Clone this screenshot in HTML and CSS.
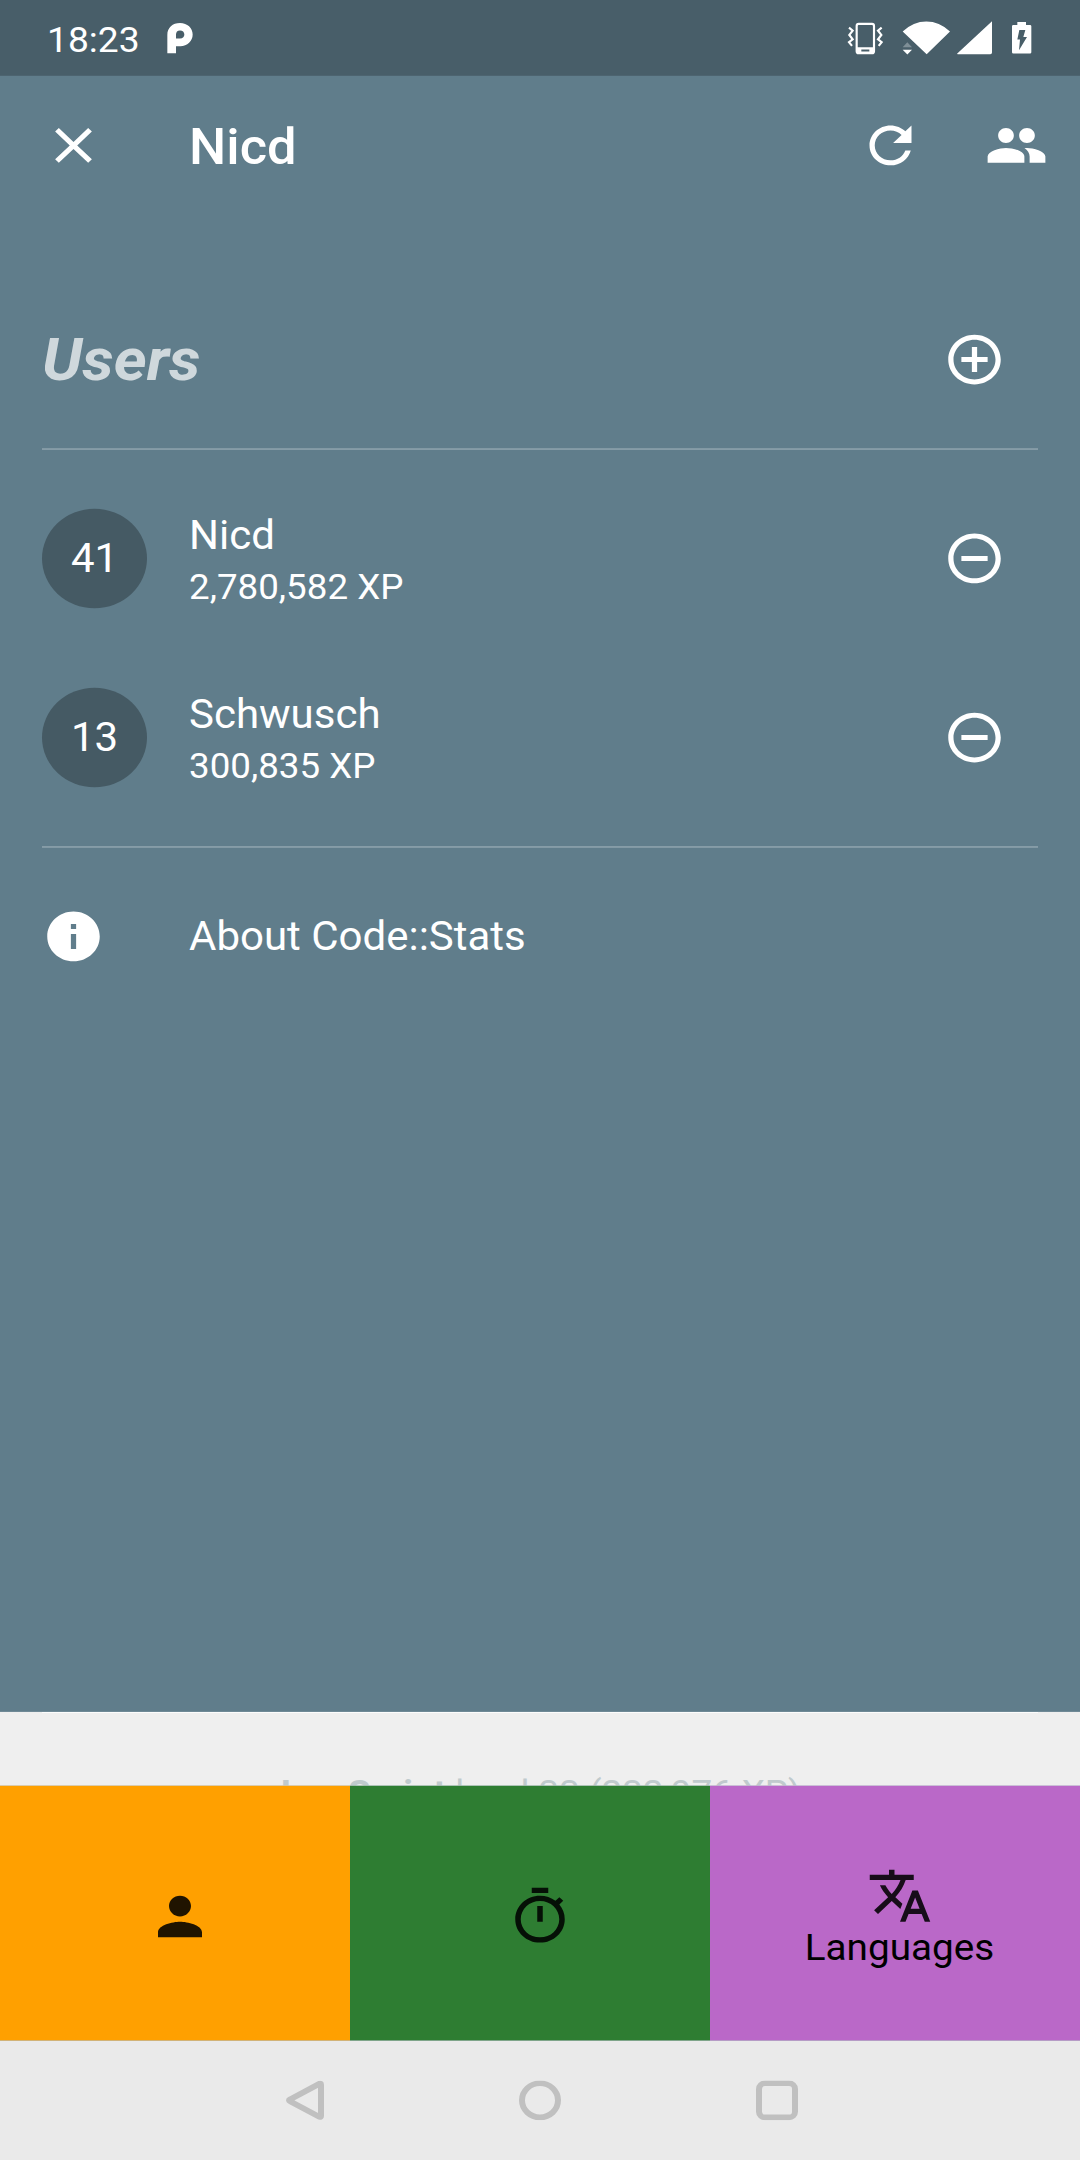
FILE: index.html
```html
<!DOCTYPE html>
<html lang="en">
<head>
<meta charset="utf-8">
<title>Code::Stats</title>
<link rel="stylesheet" href="styles.css">
</head>
<body>
<div class="screen">
  <header class="status-bar">
    <span class="clock">18:23</span>
    <svg class="app-mark" viewBox="495 0 90 228" preserveAspectRatio="none"><path fill="#fff" fill-rule="evenodd" d="M502 160V105C502 83 518 69 540 69s38 15 38 35-16 35-37 35H528v21zM528 116h12c9 0 13-5 13-12s-5-12-13-12-12 5-12 12z"/></svg>
    <span class="spacer"></span>
    <svg class="status-icons" viewBox="75 0 570 228" preserveAspectRatio="none">
      <g fill="none" stroke="#fff" stroke-width="6.5">
        <rect x="110" y="72" width="52" height="88" rx="6"/>
        <path d="M87 83l11 9-10 13 10 13-11 9 9 11M185 83l-11 9 10 13-10 13 11 9-9 11"/>
      </g>
      <path fill="#fff" fill-rule="evenodd" d="M110 142h52v18h-52zM124 149v6h24v-6z"/>
      <path fill="#fff" d="M248 95Q280 65 319 65T390 95L320 163zM248 150h28l-14 14zM411 162L516 64v94q0 5-5 5H413zM592 66h26v9h12q4 0 4 4v78q0 4-4 4h-50q-4 0-4-4V79q0-4 4-4h12z"/>
      <path fill="#7f8f97" d="M248 142h28l-14-15z"/>
      <path fill="#485e68" d="M598 90h18l-6 21h11l-24 40 3-32h-8z"/>
    </svg>
  </header>

  <nav class="app-bar">
    <svg class="icon" viewBox="0 0 24 24"><path d="M19 6.41L17.59 5 12 10.59 6.41 5 5 6.41 10.59 12 5 17.59 6.41 19 12 13.41 17.59 19 19 17.59 13.41 12z"/></svg>
    <h1 class="title">Nicd</h1>
    <span class="action"><svg class="icon" viewBox="0 0 24 24"><path d="M17.65 6.35C16.2 4.9 14.21 4 12 4c-4.42 0-7.99 3.58-7.99 8s3.57 8 7.99 8c3.73 0 6.84-2.55 7.73-6h-2.08c-.82 2.33-3.04 4-5.65 4-3.31 0-6-2.69-6-6s2.69-6 6-6c1.66 0 3.14.69 4.22 1.78L13 11h7V4l-2.35 2.35z"/></svg></span>
    <span class="action"><svg class="icon" viewBox="0 0 24 24"><path d="M16 11c1.66 0 2.99-1.34 2.99-3S17.66 5 16 5c-1.66 0-3 1.34-3 3s1.34 3 3 3zm-8 0c1.66 0 2.99-1.34 2.99-3S9.66 5 8 5C6.34 5 5 6.34 5 8s1.34 3 3 3zm0 2c-2.33 0-7 1.17-7 3.5V19h14v-2.5c0-2.33-4.67-3.5-7-3.5zm8 0c-.29 0-.62.02-.97.05 1.16.84 1.97 1.97 1.97 3.45V19h6v-2.5c0-2.33-4.67-3.5-7-3.5z"/></svg></span>
  </nav>

  <main class="panel">
    <div class="row row-short">
      <h2 class="heading">Users</h2>
      <span class="action"><svg class="icon" viewBox="0 0 24 24"><path d="M13 7h-2v4H7v2h4v4h2v-4h4v-2h-4V7zm-1-5C6.48 2 2 6.48 2 12s4.480 10 10 10 10-4.480 10-10S17.520 2 12 2zm0 18c-4.410 0-8-3.590-8-8s3.590-8 8-8 8 3.590 8 8-3.590 8-8 8z"/></svg></span>
    </div>
    <div class="divider"></div>
    <div class="row">
      <span class="level">41</span>
      <div class="user"><span class="name">Nicd</span><span class="xp">2,780,582 XP</span></div>
      <span class="action"><svg class="icon" viewBox="0 0 24 24"><path d="M7 11v2h10v-2H7zm5-9C6.480 2 2 6.480 2 12s4.480 10 10 10 10-4.480 10-10S17.520 2 12 2zm0 18c-4.410 0-8-3.590-8-8s3.590-8 8-8 8 3.590 8 8-3.590 8-8 8z"/></svg></span>
    </div>
    <div class="row">
      <span class="level">13</span>
      <div class="user"><span class="name">Schwusch</span><span class="xp">300,835 XP</span></div>
      <span class="action"><svg class="icon" viewBox="0 0 24 24"><path d="M7 11v2h10v-2H7zm5-9C6.480 2 2 6.480 2 12s4.480 10 10 10 10-4.480 10-10S17.520 2 12 2zm0 18c-4.410 0-8-3.590-8-8s3.590-8 8-8 8 3.590 8 8-3.590 8-8 8z"/></svg></span>
    </div>
    <div class="divider"></div>
    <div class="row row-short">
      <svg class="icon about-icon" viewBox="0 0 24 24"><path d="M12 2C6.480 2 2 6.480 2 12s4.480 10 10 10 10-4.480 10-10S17.520 2 12 2zm1 15h-2v-6h2v6zm0-8h-2V7h2v2z"/></svg>
      <span class="name">About Code::Stats</span>
    </div>
  </main>

  <section class="sheet">
    <div class="sheet-edge"></div>
    <p class="progress"><b>JavaScript</b> level 33 (232,976 XP)</p>
  </section>

  <div class="tabs">
    <div class="tab tab-profile"><svg class="tab-icon" viewBox="0 0 24 24"><path d="M12 12c2.210 0 4-1.790 4-4s-1.790-4-4-4-4 1.790-4 4 1.790 4 4 4zm0 2c-2.670 0-8 1.340-8 4v2h16v-2c0-2.660-5.330-4-8-4z"/></svg></div>
    <div class="tab tab-recent"><svg class="tab-icon" viewBox="0 0 24 24"><path d="M15 1H9v2h6V1zm-4 13h2V8h-2v6zm8.030-6.610l1.420-1.420c-.430-.510-.900-.990-1.410-1.410l-1.420 1.420C16.070 4.740 14.120 4 12 4c-4.970 0-9 4.030-9 9s4.020 9 9 9 9-4.030 9-9c0-2.120-.740-4.070-1.970-5.610zM12 20c-3.870 0-7-3.130-7-7s3.130-7 7-7 7 3.130 7 7-3.130 7-7 7z"/></svg></div>
    <div class="tab tab-languages"><svg class="tab-icon" viewBox="0 0 24 24"><path d="M12.870 15.070l-2.540-2.510.030-.030c1.740-1.940 2.980-4.170 3.710-6.530H17V4h-7V2H8v2H1v1.990h11.170C11.500 7.920 10.440 9.750 9 11.350 8.070 10.320 7.300 9.190 6.690 8h-2c.730 1.630 1.730 3.170 2.980 4.560l-5.090 5.020L4 19l5-5 3.110 3.110.760-2.040zM18.500 10h-2L12 22h2l1.120-3h4.750L21 22h2l-4.500-12zm-2.620 7l1.620-4.330L19.120 17h-3.240z"/></svg><span class="tab-label">Languages</span></div>
  </div>

  <footer class="nav-bar">
    <svg class="nav-icon nav-back" viewBox="0 0 42 42"><path d="M36 4.500V37.500Q36 39 34.500 38.500L5 22Q3 21 5 20L34.500 3.500Q36 3 36 4.500z"/></svg>
    <svg class="nav-icon" viewBox="0 0 42 42"><circle cx="21" cy="21" r="18"/></svg>
    <svg class="nav-icon" viewBox="0 0 42 42"><rect x="3" y="3" width="36" height="36" rx="6"/></svg>
  </footer>
</div>
</body>
</html>
```
FILE: styles.css
```css
* { box-sizing: border-box; margin: 0; padding: 0; }
html, body { width: 1080px; height: 2160px; overflow: hidden; }
body { font-family: Roboto, "Liberation Sans", sans-serif; color: #fff; background: #607d8b; }

/* The layout is 1080x2280 and is fitted to a 2160px tall window. */
.screen {
  width: 1080px;
  height: 2280px;
  margin-bottom: -120px;
  display: flex;
  flex-direction: column;
  background: #607d8b;
  transform: scaleY(0.947368);
  transform-origin: 0 0;
}

.status-bar { height: 80px; flex: none; display: flex; align-items: center; background: #485e69; padding: 0 45px 0 47px; }
.clock { font-size: 37.2px; line-height: 76px; padding-top: 4px; }
.app-mark { width: 30px; height: 80px; margin-left: 25px; }
.spacer { flex: 1; }
.status-icons { width: 190px; height: 80px; flex: none; }

.app-bar { height: 147px; flex: none; display: flex; align-items: center; padding-left: 42px; }
.icon { width: 63px; height: 63px; fill: #fff; display: block; flex: none; }
.title { flex: 1; margin-left: 84px; padding-top: 3px; font-size: 52.5px; font-weight: 500; line-height: 62px; }
.action { width: 126px; flex: none; display: flex; justify-content: center; padding-right: 1px; }

.panel { height: 1580px; flex: none; padding: 79px 42px 0; }
.row { height: 189px; display: flex; align-items: center; }
.row-short { height: 147px; }
.heading { flex: 1; font-size: 63px; font-weight: 700; font-style: italic; line-height: 74px; color: #cfd8dc; }
.divider { height: 42px; display: flex; align-items: center; }
.divider::before { content: ""; flex: 1; height: 2px; background: #869ca7; }
.level { width: 105px; height: 105px; border-radius: 50%; background: #455a64; font-size: 42px; line-height: 106px; text-align: center; flex: none; }
.user { flex: 1; margin-left: 42px; display: flex; flex-direction: column; }
.name { font-size: 42px; line-height: 50px; }
.xp { font-size: 36.75px; line-height: 43px; margin: 8px 0 -2px; }
.about-icon { margin-right: 84px; }

.sheet { height: 78px; flex: none; overflow: hidden; background: #efefef; }
.sheet-edge { height: 1px; margin: 0 42px; background: #fff; }
.progress { margin-top: 63px; padding-right: 9px; text-align: center; font-size: 36.75px; line-height: 43px; color: #c0cacd; white-space: nowrap; }

.tabs { height: 269px; flex: none; display: grid; grid-template-columns: 350px 360px 1fr; color: #000; }
.tab { display: flex; flex-direction: column; align-items: center; justify-content: center; padding-top: 7px; }
.tab-profile { background: #ffa000; padding-left: 10px; }
.tab-recent { background: #2e7d32; padding-left: 20px; }
.tab-languages { background: #ba68c8; padding-left: 9px; }
.tab-icon { width: 66px; height: 66px; fill: #000; opacity: .87; }
.tab-label { font-size: 38.7px; line-height: 44px; }

.nav-bar { height: 126px; flex: none; display: flex; align-items: center; justify-content: space-between; padding: 0 282px; background: #eaeaea; }
.nav-icon { width: 42px; height: 42px; fill: none; stroke: #c0c0c0; stroke-width: 6; }
.nav-back { margin: 0 -3px 0 3px; }
```
